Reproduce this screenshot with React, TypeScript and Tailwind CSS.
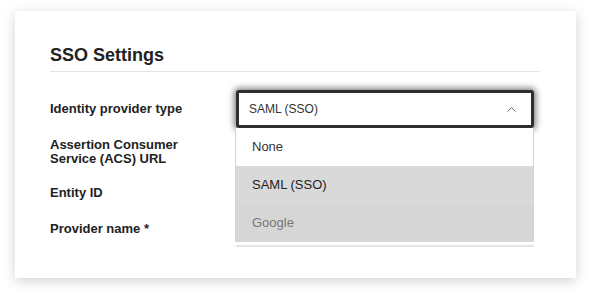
import { ChevronUp } from "lucide-react";

const font = { fontFamily: '"Liberation Sans", Arial, sans-serif' };

const options = [
  { label: "None", className: "bg-white text-[#333]" },
  { label: "SAML (SSO)", className: "bg-[#d9d9d9] text-[#222]" },
  { label: "Google", className: "bg-[#d6d6d6] text-[#777]" },
];

export default function App() {
  return (
    <div className="w-[591px] h-[298px] bg-white pt-[11px] pl-[15px]" style={font}>
      <div className="w-[561px] h-[267px] bg-white shadow-[0_3px_12px_rgba(0,0,0,0.18)] pt-[32px] pl-[35px] pr-[36px]">
        {/* Heading */}
        <h2 className="text-[18px] leading-[24px] font-bold text-[#222] pb-[4px] border-b border-[#e4e4e4]">
          SSO Settings
        </h2>

        <div className="relative mt-[18px]">
          {/* Row 1 */}
          <div className="flex items-center h-[38px]">
            <div className="w-[186px] text-[13px] font-bold text-[#222]">Identity provider type</div>
            <div className="w-[298px] h-[38px] flex items-center justify-between pl-[10px] pr-[12px] bg-white border-[3px] border-[#2e2e2e] rounded-[3px] shadow-[0_0_6px_2px_rgba(0,0,0,0.5)] text-[12px] text-[#333]">
              <span>SAML (SSO)</span>
              <ChevronUp className="w-[15px] h-[15px] text-[#444]" strokeWidth={1.3} />
            </div>
          </div>

          {/* Row 2 */}
          <div className="flex items-center h-[47px]">
            <div className="w-[186px] text-[13px] leading-[14px] font-bold text-[#222]">
              Assertion Consumer
              <br />
              Service (ACS) URL
            </div>
            <div className="w-[298px] h-[34px] border-b border-[#e0e0e0]" />
          </div>

          {/* Row 3 */}
          <div className="flex items-center h-[36px]">
            <div className="w-[186px] text-[13px] font-bold text-[#222]">Entity ID</div>
            <div className="w-[298px] h-[34px] border-b border-[#e0e0e0]" />
          </div>

          {/* Row 4 */}
          <div className="flex items-center h-[36px]">
            <div className="w-[186px] text-[13px] font-bold text-[#222]">Provider name *</div>
            <div className="w-[298px] h-[36px] border-b-2 border-[#e4e4e4]" />
          </div>

          {/* Open dropdown list */}
          <div className="absolute left-[185px] top-[38px] w-[299px] border-x border-[#d4d4d4]">
            {options.map((o) => (
              <div key={o.label} className={`h-[38px] flex items-center pl-[16px] text-[13px] ${o.className}`}>
                {o.label}
              </div>
            ))}
          </div>
        </div>
      </div>
    </div>
  );
}
